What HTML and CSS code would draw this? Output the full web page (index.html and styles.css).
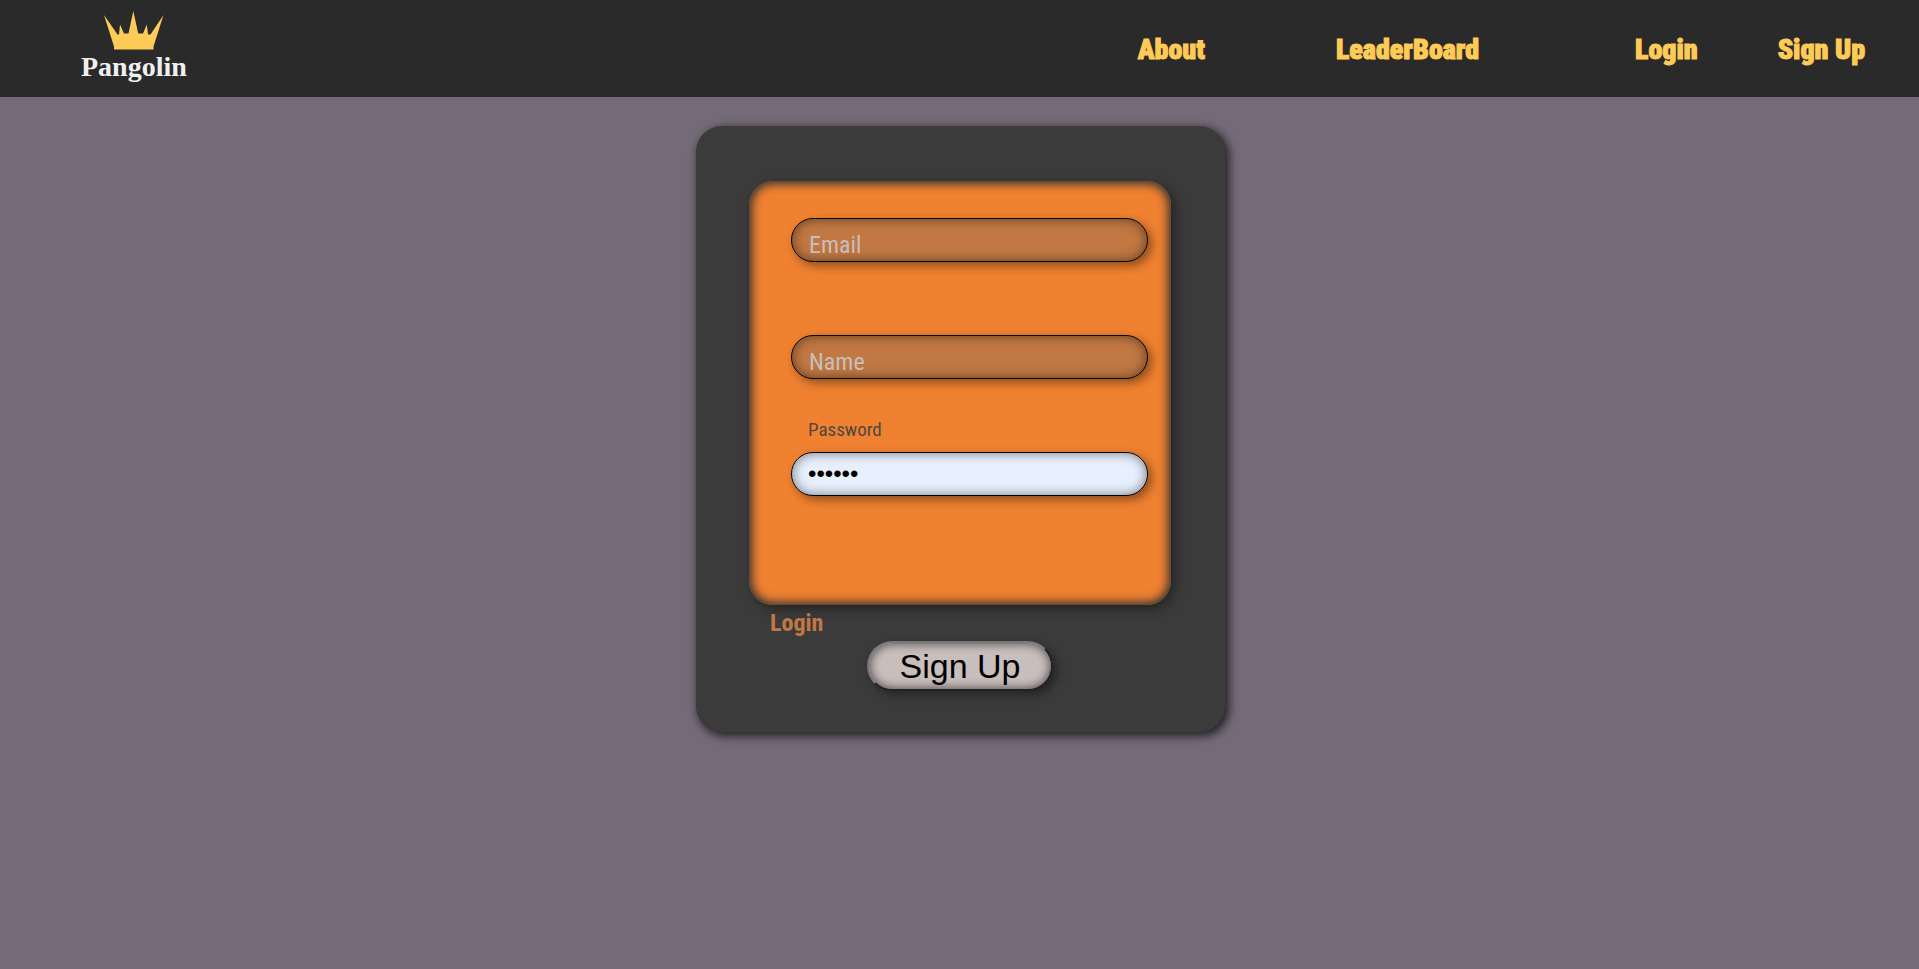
FILE: index.html
```html
<!DOCTYPE html>
<html lang="en">
<head>
<meta charset="utf-8">
<title>Pangolin - Sign Up</title>
<link rel="stylesheet" href="styles.css">
</head>
<body>
<header class="header">
  <a class="logo" href="#">
    <svg class="crown" viewBox="0 0 60 40" aria-hidden="true">
      <path d="M0 4 L13.500 23.500H15L16 13.500L20 22.500H24.500L29.300 0 L34.200 22.500H39L42.800 13.500L44 23.500H46.500L59.500 4 L49.500 35.500V38.500H10V35.500Z"/>
    </svg>
    <span class="brand">Pangolin</span>
  </a>
  <nav class="nav">
    <div class="pages"><a href="#">About</a><a href="#">LeaderBoard</a></div>
    <div class="account"><a href="#">Login</a><a href="#">Sign Up</a></div>
  </nav>
</header>
<main class="main">
  <form class="card">
    <div class="fields">
      <div class="field">
        <input id="email" type="email">
        <label for="email">Email</label>
      </div>
      <div class="field">
        <input id="name" type="text">
        <label for="name">Name</label>
      </div>
      <div class="field filled">
        <input id="password" type="password" value="secret">
        <label for="password">Password</label>
      </div>
    </div>
    <a class="login" href="#">Login</a>
    <button class="submit" type="submit">Sign Up</button>
  </form>
</main>
</body>
</html>
```
FILE: styles.css
```css
* { box-sizing: border-box; }
body {
  margin: 0;
  min-height: 100vh;
  background: #736b78;
  font-family: "Roboto Condensed", "Liberation Sans Narrow", Roboto, sans-serif;
}
a { text-decoration: none; }
.header {
  display: flex;
  justify-content: space-between;
  align-items: center;
  height: 97px;
  padding: 0 54px 0 81px;
  background: #2a2a2a;
}
.logo {
  display: flex;
  flex-direction: column;
  align-items: center;
  padding-bottom: 4px;
}
.crown {
  width: 60px;
  height: 40px;
  fill: #ffcb57;
}
.brand {
  color: #f0f0f0;
  font: bold 28px/32px "Liberation Serif", serif;
}
.nav {
  display: flex;
  gap: 156px;
  padding-top: 2px;
}
.pages { display: flex; gap: 131px; }
.account { display: flex; gap: 80px; }
.nav a {
  color: #ffcb57;
  font-size: 28px;
  font-weight: 900;
  line-height: 32px;
  -webkit-text-stroke: 1px #ffcb57;
}
.main {
  display: flex;
  justify-content: center;
  padding: 29px 0 32px 2px;
}
.card {
  display: flex;
  flex-direction: column;
  width: 529px;
  padding: 55px 54px 41px 53px;
  border-radius: 26px;
  background: #3b3b3b;
  box-shadow: 3px 3px 10px 1px rgba(0, 0, 0, 0.7);
}
.fields {
  display: grid;
  gap: 73px;
  padding: 37px 23px 109px 42px;
  border-radius: 24px;
  background: #ef8130;
  box-shadow: 4px 4px 12px rgba(0, 0, 0, 0.4), inset 0 0 10px 3px #333;
}
.field { position: relative; }
.field input {
  display: block;
  width: 100%;
  height: 44px;
  padding: 0 16px;
  border: 1px solid #000;
  border-radius: 22px;
  outline: 0;
  background: #c17843;
  box-shadow: 4px 4px 10px rgba(0, 0, 0, 0.4), inset 0 0 12px rgba(0, 0, 0, 0.5);
  font: 24px "Liberation Sans", sans-serif;
}
.field label {
  position: absolute;
  top: 11px;
  left: 18px;
  color: #c8bebc;
  font-size: 24px;
  line-height: 32px;
}
.field.filled input { background: #e8f0fe; }
.field.filled label {
  top: -34px;
  left: 17px;
  color: #4f4742;
  font-size: 19px;
  line-height: 24px;
}
.login {
  align-self: flex-start;
  margin: 2px 0 2px 21px;
  color: #c17843;
  font-size: 24px;
  font-weight: bold;
  line-height: 32px;
}
.submit {
  align-self: center;
  padding: 0 31px;
  border: 2px outset #777;
  border-radius: 25px;
  background: #c8bebc;
  color: #000;
  box-shadow: 4px 4px 10px rgba(0, 0, 0, 0.4), inset 0 0 10px 1px rgba(0, 0, 0, 0.6);
  font: 34px/46px "Liberation Sans", sans-serif;
}
```
